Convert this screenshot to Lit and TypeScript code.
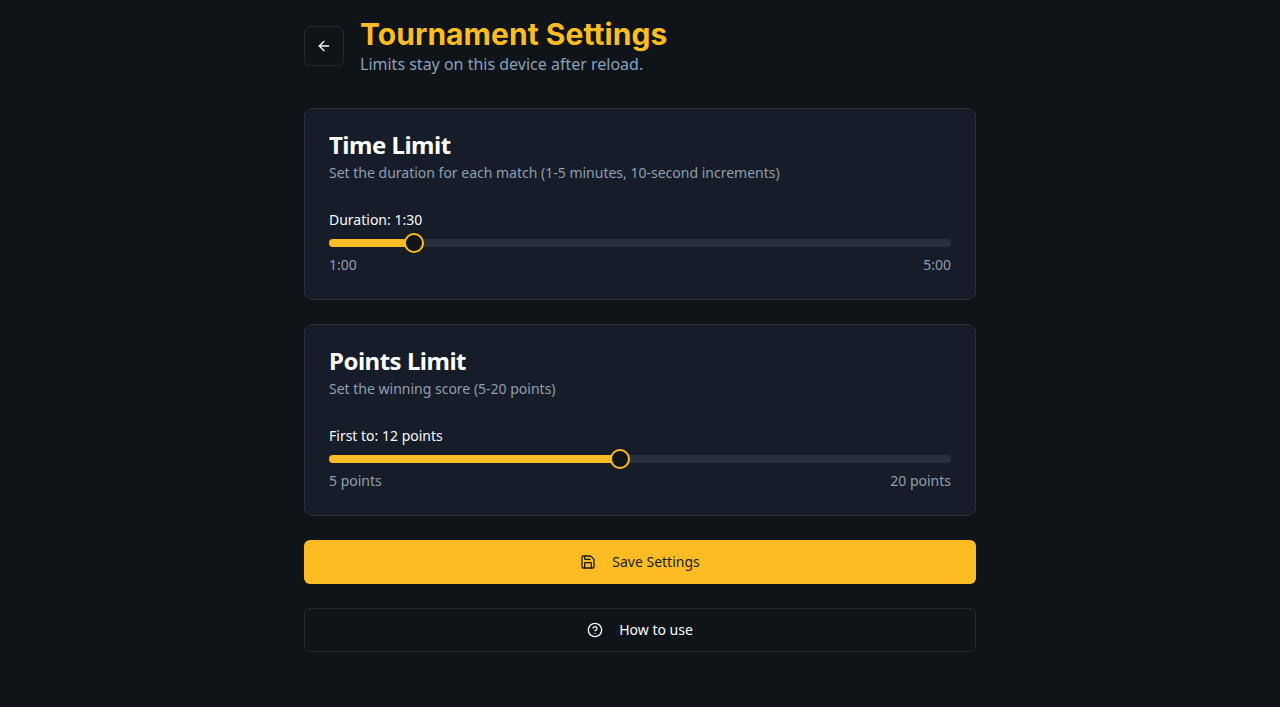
import { LitElement, html, css, svg } from "lit";
import { customElement, property } from "lit/decorators.js";

@customElement("limit-slider")
class LimitSlider extends LitElement {
  @property() label = "";
  @property() low = "";
  @property() high = "";
  @property({ type: Number }) min = 0;
  @property({ type: Number }) max = 1;
  @property({ type: Number }) value = 0;
  static styles = css`
    :host { display: block; }
    .label { font-size: 14px; line-height: 20px; font-weight: 400; color: #f8fafc; margin-bottom: 3px; }
    .slider { position: relative; height: 20px; display: flex; align-items: center; }
    .track { flex: 1; height: 8px; border-radius: 4px; background: #2a303c; overflow: hidden; }
    .fill { height: 100%; background: #fdbc24; }
    .thumb { position: absolute; top: 0; width: 20px; height: 20px; box-sizing: border-box; margin-left: -10px;
      border-radius: 50%; border: 2px solid #fdbc24; background: #10151a; }
    .ends { display: flex; justify-content: space-between; margin-top: 2px; font-size: 14px; line-height: 20px; color: #919db0; }
  `;
  render() {
    const f = (this.value - this.min) / (this.max - this.min);
    const pos = `calc(10px + (100% - 20px) * ${f})`;
    return html`
      <div class="label">${this.label}</div>
      <div class="slider">
        <div class="track"><div class="fill" style="width:${pos}"></div></div>
        <div class="thumb" style="left:${pos}"></div>
      </div>
      <div class="ends"><span>${this.low}</span><span>${this.high}</span></div>
    `;
  }
}

const icon = (body: unknown) => html`<svg class="icon" viewBox="0 0 24 24" width="16" height="16" fill="none" stroke="currentColor" stroke-width="2" stroke-linecap="round" stroke-linejoin="round">${body}</svg>`;

@customElement("app-root")
class AppRoot extends LitElement {
  static styles = css`
    :host { display: block; min-height: 707px; background: #0f1419; font-family: "Noto Sans", sans-serif; color: #f8fafc; }
    .page { width: 672px; margin: 0 auto; padding: 16px 0 55px; display: flex; flex-direction: column; gap: 24px; }
    header { display: flex; align-items: center; gap: 16px; margin-bottom: 8px; }
    .back { width: 40px; height: 40px; box-sizing: border-box; display: flex; align-items: center; justify-content: center;
      padding: 0; border: 1px solid #232933; border-radius: 6px; background: #0f1419; color: #f8fafc; }
    h1 { margin: 0; font-family: Inter, sans-serif; font-size: 30px; line-height: 36px; font-weight: 700; letter-spacing: 0.05px; color: #fdbc24; }
    .sub { margin: 0; font-size: 16px; line-height: 24px; color: #8aa0bb; }
    .card { border: 1px solid #2a303c; border-radius: 8px; background: #161d28; padding: 24px; }
    h2 { margin: 0; font-size: 24px; line-height: 24px; font-weight: 700; letter-spacing: -0.5px; color: #fff; }
    .desc { margin: 6px 0 27px; font-size: 14px; line-height: 20px; color: #919db0; }
    button.wide { width: 100%; height: 44px; box-sizing: border-box; display: flex; align-items: center; justify-content: center; gap: 16px;
      border-radius: 6px; font: 400 14px/20px "Noto Sans", sans-serif; }
    .save { border: 0; background: #fdbc24; color: #1a1d24; }
    .help { border: 1px solid #232933; background: #0f1419; color: #f8fafc; }
  `;
  render() {
    return html`<div class="page">
      <header>
        <button class="back" aria-label="Back">${icon(svg`<path d="m12 19-7-7 7-7"/><path d="M19 12H5"/>`)}</button>
        <div>
          <h1>Tournament Settings</h1>
          <p class="sub">Limits stay on this device after reload.</p>
        </div>
      </header>
      <section class="card">
        <h2>Time Limit</h2>
        <p class="desc">Set the duration for each match (1-5 minutes, 10-second increments)</p>
        <limit-slider label="Duration: 1:30" low="1:00" high="5:00" min="60" max="300" value="90"></limit-slider>
      </section>
      <section class="card">
        <h2>Points Limit</h2>
        <p class="desc">Set the winning score (5-20 points)</p>
        <limit-slider label="First to: 12 points" low="5 points" high="20 points" min="5" max="20" value="12"></limit-slider>
      </section>
      <button class="wide save">${icon(svg`<path d="M15.2 3a2 2 0 0 1 1.4.6l3.8 3.8a2 2 0 0 1 .6 1.4V19a2 2 0 0 1-2 2H5a2 2 0 0 1-2-2V5a2 2 0 0 1 2-2z"/><path d="M17 21v-7a1 1 0 0 0-1-1H8a1 1 0 0 0-1 1v7"/><path d="M7 3v4a1 1 0 0 0 1 1h7"/>`)}Save Settings</button>
      <button class="wide help">${icon(svg`<circle cx="12" cy="12" r="10"/><path d="M9.09 9a3 3 0 0 1 5.83 1c0 2-3 3-3 3"/><path d="M12 17h.01"/>`)}How to use</button>
    </div>`;
  }
}
